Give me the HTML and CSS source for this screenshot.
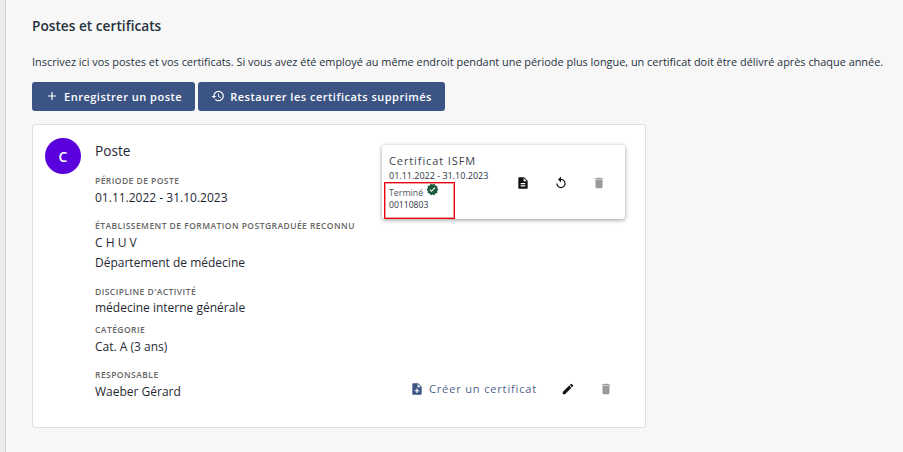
FILE: index.html
```html
<!DOCTYPE html>
<html lang="fr">
<head>
<meta charset="utf-8">
<title>Postes et certificats</title>
<link rel="stylesheet" href="styles.css">
</head>
<body>
<main class="page">
  <h1 class="title">Postes et certificats</h1>
  <p class="intro">Inscrivez ici vos postes et vos certificats. Si vous avez été employé au même endroit pendant une période plus longue, un certificat doit être délivré après chaque année.</p>
  <div class="toolbar">
    <button class="btn"><svg class="btn-icon" viewBox="0 0 24 24"><path d="M19 13h-6v6h-2v-6H5v-2h6V5h2v6h6v2z"/></svg>Enregistrer un poste</button>
    <button class="btn"><svg class="btn-icon" viewBox="0 0 24 24"><path d="M13 3a9 9 0 0 0-9 9H1l3.89 3.89.07.14L9 12H6c0-3.87 3.13-7 7-7s7 3.13 7 7-3.13 7-7 7c-1.93 0-3.68-.79-4.94-2.06l-1.42 1.42A8.954 8.954 0 0 0 13 21a9 9 0 0 0 0-18zm-1 5v5l4.28 2.54.72-1.21-3.5-2.08V8H12z"/></svg>Restaurer les certificats supprimés</button>
  </div>
  <section class="card">
    <div class="avatar">C</div>
    <div class="details">
      <h2 class="card-title">Poste</h2>
      <div class="field field-period">
        <div class="label">Période de poste</div>
        <div class="value value-gap">01.11.2022 - 31.10.2023</div>
      </div>
      <div class="field field-inst">
        <div class="label">Établissement de formation postgraduée reconnu</div>
        <div class="value value-gap">C H U V</div>
        <div class="value">Département de médecine</div>
      </div>
      <div class="field field-disc">
        <div class="label">Discipline d'activité</div>
        <div class="value">médecine interne générale</div>
      </div>
      <div class="field field-cat">
        <div class="label">Catégorie</div>
        <div class="value value-gap">Cat. A (3 ans)</div>
      </div>
      <div class="field field-resp">
        <div class="label">Responsable</div>
        <div class="value value-gap">Waeber Gérard</div>
      </div>
    </div>
    <div class="side">
      <article class="cert">
        <div class="cert-text">
          <div class="cert-title">Certificat ISFM</div>
          <div class="cert-line">01.11.2022 - 31.10.2023</div>
          <div class="cert-line cert-status">Terminé <svg class="verified" viewBox="0 0 24 24"><path d="M23 12l-2.44-2.79.34-3.69-3.61-.82-1.89-3.2L12 2.96 8.6 1.5 6.71 4.69 3.1 5.5l.34 3.7L1 12l2.44 2.79-.34 3.7 3.61.82L8.6 22.5l3.4-1.47 3.4 1.46 1.89-3.19 3.61-.82-.34-3.69L23 12zm-12.91 4.72l-3.8-3.81 1.48-1.48 2.32 2.33 5.85-5.87 1.48 1.48-7.33 7.35z"/></svg></div>
          <div class="cert-line cert-num">00110803</div>
        </div>
        <div class="cert-actions">
          <svg class="icon icon-dark" viewBox="0 0 24 24"><path d="M14 2H6c-1.1 0-2 .9-2 2v16c0 1.1.9 2 2 2h12c1.1 0 2-.9 2-2V8l-6-6zm2 16H8v-2h8v2zm0-4H8v-2h8v2zm-3-5V3.5L18.5 9H13z"/></svg>
          <svg class="icon icon-dark" viewBox="0 0 24 24"><path d="M12 5V1L7 6l5 5V7c3.31 0 6 2.69 6 6s-2.69 6-6 6-6-2.69-6-6H4c0 4.42 3.58 8 8 8s8-3.58 8-8-3.58-8-8-8z"/></svg>
          <svg class="icon icon-grey" viewBox="0 0 24 24"><path d="M6 19c0 1.1.9 2 2 2h8c1.1 0 2-.9 2-2V7H6v12zM19 4h-3.5l-1-1h-5l-1 1H5v2h14V4z"/></svg>
        </div>
        <div class="highlight"></div>
      </article>
      <div class="card-actions">
        <span class="create"><svg class="icon icon-blue" viewBox="0 0 24 24"><path d="M14 2H6c-1.1 0-1.99.9-1.99 2L4 20c0 1.1.89 2 1.99 2H18c1.1 0 2-.9 2-2V8l-6-6zm2 14h-3v3h-2v-3H8v-2h3v-3h2v3h3v2zm-3-7V3.5L18.5 9H13z"/></svg>Créer un certificat</span>
        <svg class="icon icon-dark" viewBox="0 0 24 24"><path d="M3 17.25V21h3.75L17.81 9.94l-3.75-3.75L3 17.25zM20.71 7.04a1 1 0 0 0 0-1.41l-2.34-2.34a1 1 0 0 0-1.41 0l-1.83 1.83 3.75 3.75 1.83-1.83z"/></svg>
        <svg class="icon icon-grey" viewBox="0 0 24 24"><path d="M6 19c0 1.1.9 2 2 2h8c1.1 0 2-.9 2-2V7H6v12zM19 4h-3.5l-1-1h-5l-1 1H5v2h14V4z"/></svg>
      </div>
    </div>
  </section>
</main>
</body>
</html>
```
FILE: styles.css
```css
* { box-sizing: border-box; }
html, body { margin: 0; height: 100%; }
body {
  background: #f7f7f7;
  color: #1f2933;
  font-family: "Open Sans", "Noto Sans", sans-serif;
  overflow: hidden;
}
.page {
  height: 452px;
  margin-left: 5px;
  padding: 16px 0 0 26px;
  border-left: 1px solid #cfcfcf;
  box-shadow: -5px 0 0 #ececec;
}
.title {
  margin: 0;
  font-size: 13.7px;
  line-height: 20px;
  font-weight: 600;
  color: #26323d;
}
.intro {
  margin: 18px 0 0;
  font-size: 10.9px;
  line-height: 16px;
  white-space: nowrap;
  color: #26323d;
}
.toolbar { display: flex; gap: 3px; margin-top: 12px; }
.btn {
  display: flex;
  align-items: center;
  height: 29px;
  margin: 0;
  padding: 0 13px 1px 13px;
  border: 0;
  border-radius: 3px;
  background: #3b5484;
  color: #fff;
  font: 600 11px "Open Sans", sans-serif;
  letter-spacing: 0.5px;
}
.btn-icon { width: 14px; height: 14px; margin-right: 5px; fill: #fff; }
.card {
  display: flex;
  width: 614px;
  height: 304px;
  margin-top: 13px;
  padding: 13px 20px 0 12px;
  background: #fff;
  border: 1px solid #dedede;
  border-radius: 3px;
}
.avatar {
  flex: none;
  display: flex;
  align-items: center;
  justify-content: center;
  width: 36px;
  height: 36px;
  border-radius: 50%;
  background: #5a00dc;
  color: #fff;
  font-size: 14px;
  font-weight: 600;
}
.details { flex: none; width: 287px; margin-left: 14px; }
.card-title { margin: 1px 0 0; font-size: 13.7px; line-height: 24px; font-weight: 400; color: #1f2933; }
.label {
  font-size: 8.5px;
  line-height: 12px;
  font-weight: 600;
  text-transform: uppercase;
  letter-spacing: 0.45px;
  color: #666;
  white-space: nowrap;
}
.value { font-size: 12px; line-height: 20px; color: #1f2933; white-space: nowrap; }
.value-gap { margin-top: 1px; }
.field-period { margin-top: 12px; }
.field-inst { margin-top: 12px; }
.field-disc { margin-top: 13px; }
.field-cat { margin-top: 6px; }
.field-resp { margin-top: 12px; }
.side { flex: none; width: 243px; display: flex; flex-direction: column; margin-top: 7px; }
.cert {
  position: relative;
  display: flex;
  height: 74px;
  padding: 7px 7px 0 7px;
  background: #fff;
  border-radius: 3px;
  box-shadow: 0 1px 4px rgba(0, 0, 0, 0.4);
}
.cert-text { flex: none; width: 112px; }
.cert-title { font-size: 11px; line-height: 17px; letter-spacing: 0.9px; color: #3a4550; white-space: nowrap; }
.cert-line { font-size: 9px; line-height: 14px; color: #2b3640; white-space: nowrap; }
.cert-status { font-size: 8.8px; color: #4a5560; }
.cert-num { font-size: 8.6px; margin-top: -2px; }
.verified { width: 13px; height: 13px; fill: #1d5a3a; vertical-align: 0; margin-left: 1px; }
.cert-actions { display: flex; align-items: center; gap: 24px; margin: -6px 0 0 15px; height: 74px; }
.icon { flex: none; width: 14px; height: 14px; }
.icon-dark { fill: #111; }
.icon-grey { fill: #9a9a9a; }
.icon-blue { fill: #3b5484; }
.highlight {
  position: absolute;
  left: 2px;
  top: 37px;
  width: 71px;
  height: 37px;
  border: 1px solid #e8000c;
  box-shadow: inset 0 0 0 1px rgba(232, 0, 12, 0.4);
}
.card-actions { display: flex; align-items: center; margin-top: 162px; padding-left: 28px; }
.create {
  display: flex;
  align-items: center;
  width: 151px;
  font-size: 11px;
  letter-spacing: 0.85px;
  color: #4f6389;
  white-space: nowrap;
}
.create .icon { margin-right: 5px; }
.card-actions > .icon-grey { margin-left: 24px; }
```
